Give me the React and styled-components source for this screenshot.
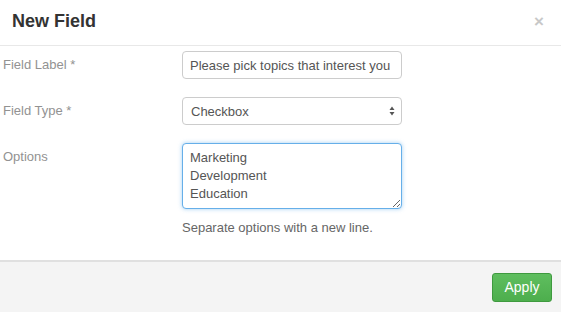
import React from "react";
import styled, { createGlobalStyle } from "styled-components";

const Global = createGlobalStyle`
  html, body { margin: 0; padding: 0; background: #fff; }
  body { font-family: "Liberation Sans", Arial, sans-serif; }
  * { box-sizing: border-box; }
`;

const Modal = styled.div`
  width: 561px;
  height: 312px;
  display: flex;
  flex-direction: column;
  background: #fff;
`;

const Header = styled.div`
  height: 46px;
  display: flex;
  align-items: center;
  justify-content: space-between;
  padding: 0 17px 2px 12px;
  border-bottom: 1px solid #e8e8e8;
`;

const Title = styled.h1`
  margin: 0;
  font-size: 18px;
  font-weight: bold;
  color: #333;
`;

const Close = styled.span`
  color: #c8c8c8;
  font-size: 17px;
  line-height: 1;
  font-weight: bold;
`;

const Body = styled.div`
  flex: 1;
  display: flex;
  flex-direction: column;
  gap: 18px;
  padding: 5px 0 0 3px;
`;

const Row = styled.div`
  display: grid;
  grid-template-columns: 179px 220px;
  align-items: ${(p) => (p.$top ? "start" : "center")};
`;

const Label = styled.label`
  font-size: 13px;
  color: #929292;
  padding-top: ${(p) => (p.$top ? "5px" : "0")};
  line-height: 18px;
`;

const Input = styled.input`
  width: 220px;
  height: 28px;
  border: 1px solid #ccc;
  border-radius: 4px;
  padding: 0 7px;
  font-family: inherit;
  font-size: 13px;
  color: #555;
  outline: none;
`;

const SelectWrap = styled.div`
  position: relative;
  width: 220px;
  height: 28px;
`;

const Select = styled.select`
  appearance: none;
  width: 100%;
  height: 100%;
  border: 1px solid #ccc;
  border-radius: 4px;
  padding: 0 8px;
  background: #fff;
  font-family: inherit;
  font-size: 13px;
  color: #555;
  outline: none;
`;

const Arrows = styled.svg`
  position: absolute;
  right: 7px;
  top: 9px;
  pointer-events: none;
`;

const Textarea = styled.textarea`
  width: 220px;
  height: 66px;
  border: 1px solid #66afe9;
  border-radius: 4px;
  box-shadow: 0 0 4px rgba(102, 175, 233, 0.6);
  padding: 5px 7px;
  font-family: inherit;
  font-size: 13px;
  line-height: 18px;
  color: #555;
  outline: none;
  resize: vertical;
`;

const Help = styled.div`
  font-size: 13px;
  color: #666;
  margin-top: 7px;
`;

const Footer = styled.div`
  height: 52px;
  background: #f4f4f4;
  border-top: 2px solid #e0e0e0;
  display: flex;
  align-items: center;
  justify-content: flex-end;
  padding: 0 9px 0 0;
`;

const Button = styled.button`
  width: 60px;
  height: 29px;
  border: 1px solid #3f9a3f;
  border-radius: 3px;
  background: linear-gradient(#5fbe5f, #4dae4d);
  color: #fff;
  font-family: inherit;
  font-size: 14px;
  cursor: pointer;
`;

export default function App() {
  return (
    <>
      <Global />
      <Modal>
        <Header>
          <Title>New Field</Title>
          <Close>×</Close>
        </Header>
        <Body>
          <Row>
            <Label>Field Label *</Label>
            <Input defaultValue="Please pick topics that interest you" />
          </Row>
          <Row>
            <Label>Field Type *</Label>
            <SelectWrap>
              <Select defaultValue="Checkbox">
                <option>Checkbox</option>
                <option>Text</option>
              </Select>
              <Arrows width="6" height="10" viewBox="0 0 6 10">
                <path d="M3 0.5 L5.5 4 L0.5 4 Z" fill="#555" />
                <path d="M3 9.5 L5.5 6 L0.5 6 Z" fill="#555" />
              </Arrows>
            </SelectWrap>
          </Row>
          <Row $top>
            <Label $top>Options</Label>
            <div>
              <Textarea defaultValue={"Marketing\nDevelopment\nEducation"} />
              <Help>Separate options with a new line.</Help>
            </div>
          </Row>
        </Body>
        <Footer>
          <Button>Apply</Button>
        </Footer>
      </Modal>
    </>
  );
}
